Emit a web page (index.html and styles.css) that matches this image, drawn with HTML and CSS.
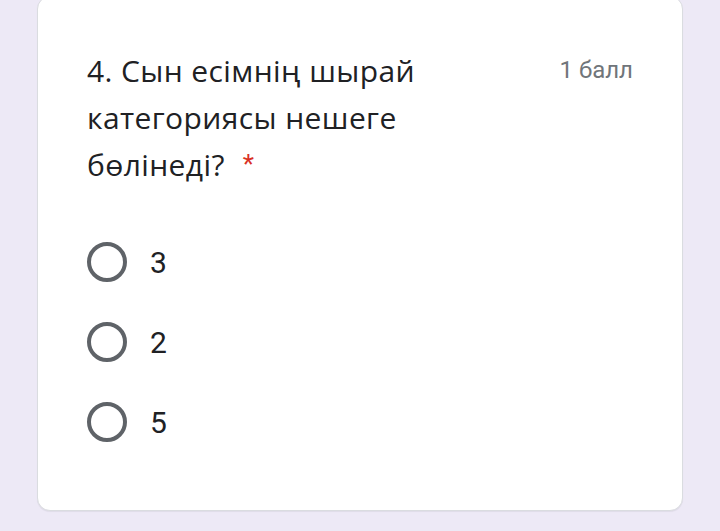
FILE: index.html
```html
<!DOCTYPE html>
<html lang="kk">
<head>
<meta charset="utf-8">
<link rel="stylesheet" href="styles.css">
</head>
<body>
<div class="page">
  <div class="card">
    <div class="head">
      <div class="title">4. Сын есімнің шырай категориясы нешеге бөлінеді?<span class="req">*</span></div>
      <div class="points">1 балл</div>
    </div>
    <div class="options">
      <label class="opt"><span class="radio"></span><span class="opt-text">3</span></label>
      <label class="opt"><span class="radio"></span><span class="opt-text">2</span></label>
      <label class="opt"><span class="radio"></span><span class="opt-text">5</span></label>
    </div>
  </div>
</div>
</body>
</html>
```
FILE: styles.css
```css
html, body {
  margin: 0;
  padding: 0;
  background: #ede9f6;
}
.page {
  width: 720px;
  height: 531px;
  overflow: hidden;
  padding: 0 37px;
  box-sizing: border-box;
}
.card {
  margin-top: -4px;
  background: #fff;
  border: 1px solid #dadce0;
  border-radius: 13px;
  padding: 50px 49px 68px 49px;
  box-shadow: 0 1px 1px rgba(0,0,0,0.06);
}
.head {
  display: flex;
  justify-content: space-between;
  align-items: flex-start;
}
.title {
  width: 420px;
  font-family: "Open Sans", sans-serif;
  font-size: 30px;
  letter-spacing: 0.4px;
  line-height: 47px;
  color: #202124;
}
.req {
  color: #d93025;
  font-family: Roboto, sans-serif;
  font-size: 26px;
  vertical-align: 3px;
  margin-left: 18px;
}
.points {
  font-family: Roboto, sans-serif;
  font-size: 24px;
  line-height: 47px;
  color: #70757a;
}
.options {
  margin-top: 54px;
  display: flex;
  flex-direction: column;
  gap: 40px;
}
.opt {
  display: flex;
  align-items: center;
  gap: 23px;
  height: 40px;
}
.radio {
  width: 40px;
  height: 40px;
  box-sizing: border-box;
  border: 4px solid #5f6368;
  border-radius: 50%;
}
.opt-text {
  font-family: Roboto, sans-serif;
  font-size: 30px;
  color: #202124;
}
```
